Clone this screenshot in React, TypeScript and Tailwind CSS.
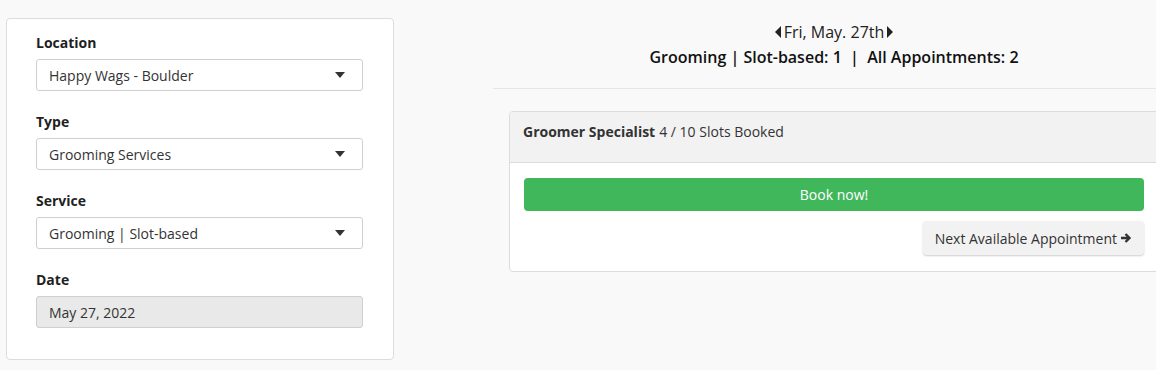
import { ReactNode } from "react";

const font = { fontFamily: '"Open Sans", "Liberation Sans", sans-serif' };

const Caret = ({ dir }: { dir: "down" | "left" | "right" }) => {
  if (dir === "down")
    return (
      <svg width="10" height="6" viewBox="0 0 10 6" className="fill-[#333]">
        <path d="M0 0h10L5 6z" />
      </svg>
    );
  if (dir === "left")
    return (
      <svg width="6" height="12" viewBox="0 0 6 12" className="fill-[#222]">
        <path d="M6 0v12L0 6z" />
      </svg>
    );
  return (
    <svg width="6" height="12" viewBox="0 0 6 12" className="fill-[#222]">
      <path d="M0 0v12l6-6z" />
    </svg>
  );
};

const Field = ({ label, children }: { label: string; children: ReactNode }) => (
  <div className="mb-[21px] last:mb-0">
    <div className="text-[14px] leading-[20px] font-bold text-[#1f1f1f] mb-[6px]">{label}</div>
    {children}
  </div>
);

const Select = ({ value }: { value: string }) => (
  <div className="h-[32px] border border-[#cfcfcf] rounded-[3px] bg-white flex items-center justify-between pl-[12px] pr-[17px] text-[14px] text-[#333]">
    <span>{value}</span>
    <Caret dir="down" />
  </div>
);

export default function App() {
  return (
    <div className="w-full h-[370px] overflow-hidden bg-[#f9f9f9]" style={font}>
      <div className="w-[1175px] flex items-start">
        <div className="w-[400px] shrink-0 pl-[6px] pr-[6px] pt-[18px]">
          <div className="bg-white border border-[#dcdcdc] rounded-[4px] pl-[29px] pr-[30px] pt-[14px] pb-[31px]">
            <Field label="Location">
              <Select value="Happy Wags - Boulder" />
            </Field>
            <Field label="Type">
              <Select value="Grooming Services" />
            </Field>
            <Field label="Service">
              <Select value="Grooming | Slot-based" />
            </Field>
            <Field label="Date">
              <div className="h-[32px] border border-[#cfcfcf] rounded-[3px] bg-[#e9e9e9] flex items-center pl-[12px] text-[14px] text-[#333]">
                May 27, 2022
              </div>
            </Field>
          </div>
        </div>
        <div className="ml-[93px] w-[682px] shrink-0">
          <div className="pt-[21px] flex flex-col items-center">
            <div className="flex items-center gap-[3px] text-[16px] leading-[22px] text-[#222]">
              <Caret dir="left" />
              <span>Fri, May. 27th</span>
              <Caret dir="right" />
            </div>
            <div className="mt-[3px] text-[16px] leading-[22px] font-semibold text-[#111] whitespace-pre">
              {"Grooming | Slot-based: 1  |  All Appointments: 2"}
            </div>
          </div>
          <div className="mt-[20px] h-px bg-[#e6e6e6]" />
          <div className="mx-[16px] mt-[22px] bg-white border border-[#dcdcdc] rounded-[4px] overflow-hidden">
            <div className="h-[51px] bg-[#f2f2f2] border-b border-[#dcdcdc] px-[13px] pt-[10px] text-[14px] leading-[20px] text-[#333]">
              <span className="font-bold">Groomer Specialist</span>
              <span className="ml-[4px]">4 / 10 Slots Booked</span>
            </div>
            <div className="px-[14px] pt-[15px] pb-[16px]">
              <div className="h-[33px] bg-[#41b75c] rounded-[4px] flex items-center justify-center text-white text-[14px]">
                Book now!
              </div>
              <div className="flex justify-end mt-[10px]">
                <div className="h-[34px] px-[12px] bg-[#f2f2f2] rounded-[4px] shadow-[0_1px_2px_rgba(0,0,0,0.2)] flex items-center gap-[3px] text-[14px] text-[#333]">
                  <span>Next Available Appointment</span>
                  <svg width="12" height="12" viewBox="0 0 12 12" className="fill-none stroke-[#333]">
                    <path d="M1 6h8.5M5.5 2l4 4-4 4" strokeWidth="2.4" />
                  </svg>
                </div>
              </div>
            </div>
          </div>
        </div>
      </div>
    </div>
  );
}
